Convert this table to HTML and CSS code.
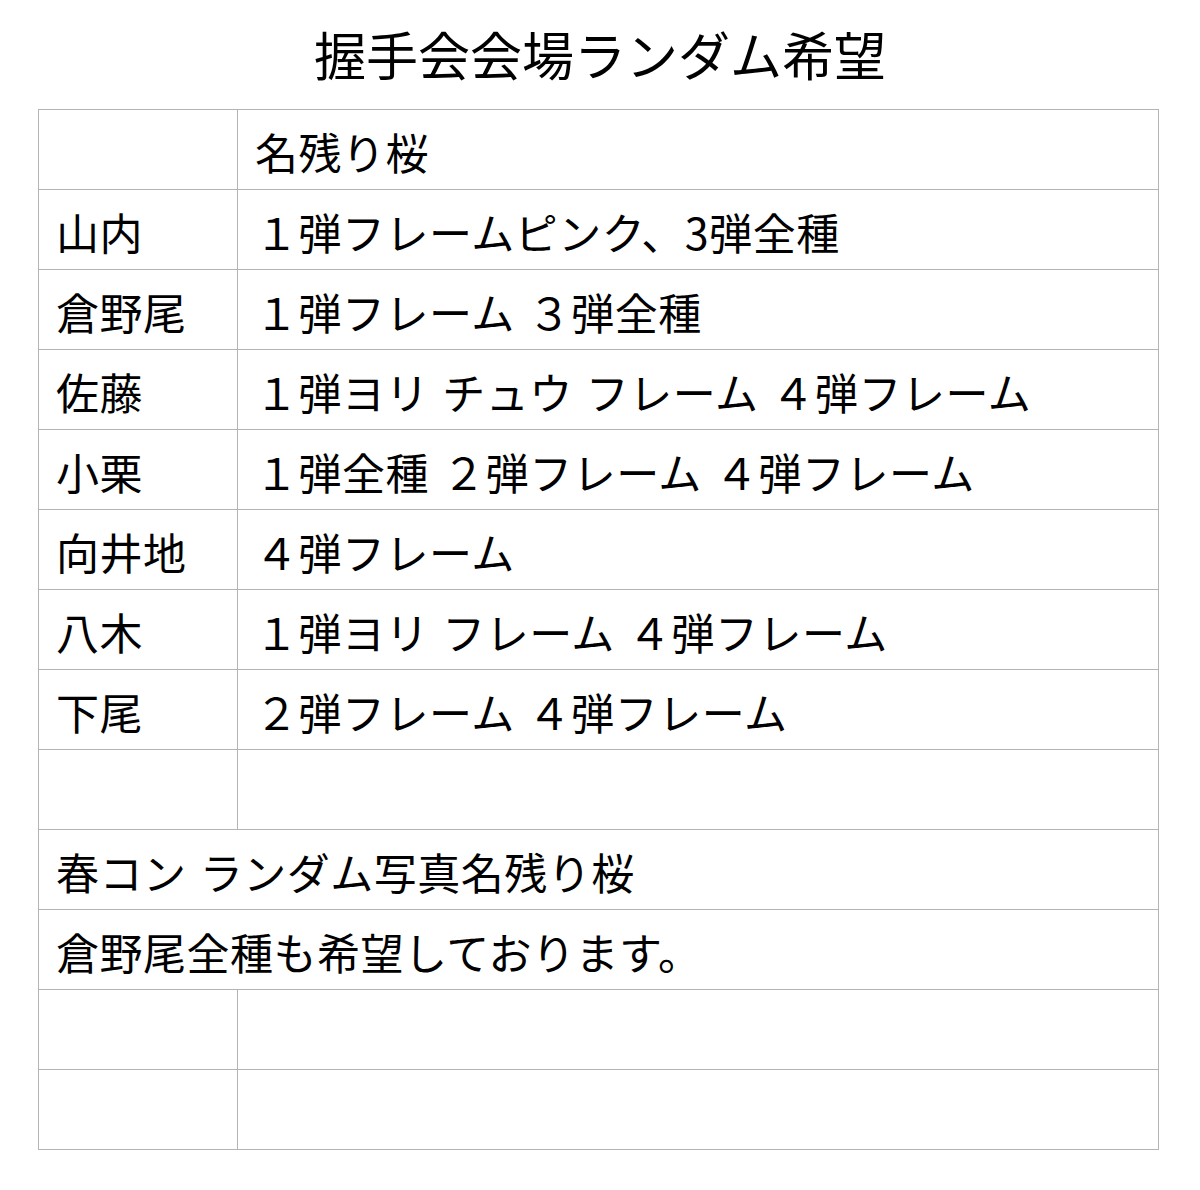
FILE: index.html
```html
<!DOCTYPE html>
<html lang="ja">
<head>
<meta charset="utf-8">
<title>握手会会場ランダム希望</title>
<link rel="stylesheet" href="styles.css">
</head>
<body>
<h1 class="title">握手会会場ランダム希望</h1>
<table class="sheet">
  <colgroup><col class="c-name"><col class="c-want"></colgroup>
  <tr><td></td><td>名残り桜</td></tr>
  <tr><td>山内</td><td>１弾フレームピンク、3弾全種</td></tr>
  <tr><td>倉野尾</td><td>１弾フレーム ３弾全種</td></tr>
  <tr><td>佐藤</td><td>１弾ヨリ チュウ フレーム ４弾フレーム</td></tr>
  <tr><td>小栗</td><td>１弾全種 ２弾フレーム ４弾フレーム</td></tr>
  <tr><td>向井地</td><td>４弾フレーム</td></tr>
  <tr><td>八木</td><td>１弾ヨリ フレーム ４弾フレーム</td></tr>
  <tr><td>下尾</td><td>２弾フレーム ４弾フレーム</td></tr>
  <tr><td></td><td></td></tr>
  <tr><td colspan="2">春コン ランダム写真名残り桜</td></tr>
  <tr><td colspan="2">倉野尾全種も希望しております。</td></tr>
  <tr><td></td><td></td></tr>
  <tr><td></td><td></td></tr>
</table>
</body>
</html>
```

FILE: styles.css
```css
html, body {
  margin: 0;
  padding: 0;
  background: #fff;
}
body {
  font-family: "Noto Sans CJK JP", "Noto Sans", sans-serif;
  color: #000;
}
.title {
  margin: 0;
  height: 109px;
  box-sizing: border-box;
  padding-top: 21px;
  font-size: 52px;
  line-height: 66px;
  font-weight: 400;
  text-align: center;
}
.sheet {
  margin-left: 38px;
  width: 1121px;
  border-collapse: collapse;
  table-layout: fixed;
}
.c-name { width: 199px; }
.sheet td {
  height: 80px;
  box-sizing: border-box;
  border: 1px solid #b4b4b4;
  padding: 3px 0 0 17px;
  font-size: 43px;
  line-height: 60px;
  letter-spacing: 0.5px;
  word-spacing: 3px;
  white-space: nowrap;
  vertical-align: middle;
}
```
